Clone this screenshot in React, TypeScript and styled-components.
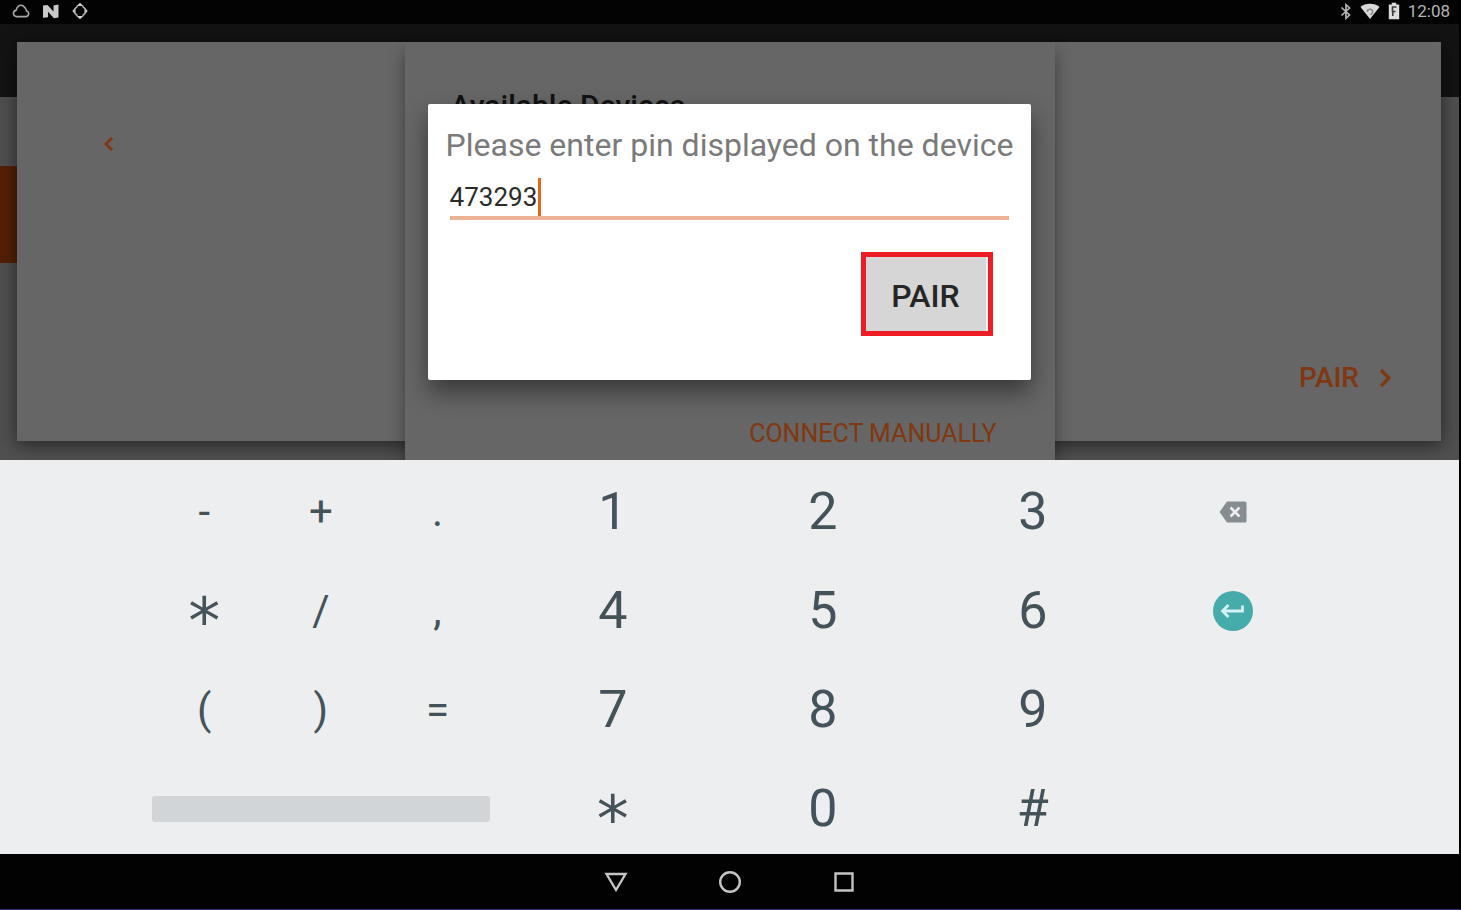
import React, { useState } from "react";
import styled, { createGlobalStyle } from "styled-components";

const GlobalStyle = createGlobalStyle`
  *, *::before, *::after { box-sizing: border-box; }
  body { margin: 0; background: #000; font-family: Roboto, "Liberation Sans", sans-serif; }
  button, input { font-family: inherit; margin: 0; padding: 0; border: 0; background: none; }
  svg { display: block; }
`;

const Screen = styled.div`
  display: flex;
  flex-direction: column;
  min-height: 100vh;
  background: #000;
  border-right: 2px solid #000;
  border-bottom: 1px solid #32357c;
`;

const StatusBar = styled.header`
  display: flex;
  justify-content: space-between;
  align-items: center;
  height: 24px;
  padding: 0 9px 2px 12px;
  background: #030303;
`;

const StatusGroup = styled.div<{ $gap: number }>`
  display: flex;
  align-items: center;
  gap: ${(p) => p.$gap}px;
`;

const Clock = styled.time`
  font-size: 17px;
  line-height: 20px;
  color: #b4b4b4;
`;

/* Windows are stacked in one grid cell, the last one on top. */
const Stage = styled.main`
  flex: 1;
  display: grid;
  grid-template: minmax(436px, 1fr) / 1fr;
  overflow: hidden;
  > * { grid-area: 1 / 1; }
`;

const Backdrop = styled.div`
  display: flex;
  flex-direction: column;
  background: #505050;
`;

const BackdropHeader = styled.div`
  height: 73px;
  background: #131313;
`;

const BackdropItem = styled.div`
  width: 200px;
  height: 97px;
  margin-top: 69px;
  background: #552006;
`;

const WizardWindow = styled.section`
  display: flex;
  justify-content: space-between;
  margin: 18px 18px 19px 17px;
  padding: 90px 48px 47px 79px;
  background: #666;
  box-shadow: 0 4px 18px rgba(0, 0, 0, 0.55);
`;

const BackButton = styled.button`
  align-self: flex-start;
  color: #81370f;
`;

const NextButton = styled.button`
  align-self: flex-end;
  display: flex;
  align-items: center;
  gap: 18px;
  font-size: 28px;
  font-weight: 500;
  line-height: 32px;
  color: #81370f;
`;

const DevicesWindow = styled.section`
  justify-self: center;
  display: flex;
  flex-direction: column;
  justify-content: space-between;
  width: 650px;
  margin-top: 18px;
  padding: 48px 58px 10px 46px;
  background: #666;
  box-shadow: 0 10px 16px rgba(0, 0, 0, 0.4);
`;

const DevicesTitle = styled.h1`
  margin: 0;
  font-size: 30px;
  font-weight: 500;
  line-height: 32px;
  color: #111;
`;

const ConnectButton = styled.button`
  align-self: flex-end;
  font-size: 25px;
  line-height: 32px;
  color: #81370f;
`;

const Dialog = styled.form`
  place-self: center;
  display: flex;
  flex-direction: column;
  padding: 23px 18px 44px;
  border-radius: 2px;
  background: #fff;
  box-shadow: 0 12px 24px rgba(0, 0, 0, 0.45);
`;

const DialogLabel = styled.label`
  font-size: 32px;
  line-height: 36px;
  white-space: nowrap;
  color: #7a7a7a;
`;

const Field = styled.div`
  position: relative;
  display: flex;
  margin: 15px 4px 32px;
`;

const PinInput = styled.input`
  width: 100%;
  height: 42px;
  border-bottom: 4px solid #edb293;
  font-size: 26px;
  line-height: 38px;
  color: #2b2b2b;
  outline: none;
`;

const Caret = styled.span`
  position: absolute;
  top: 0;
  left: 88px;
  width: 3px;
  height: 38px;
  background: #e2661c;
`;

const PairButton = styled.button`
  align-self: flex-end;
  width: 132px;
  height: 84px;
  margin-right: 20px;
  padding: 4px 4px 0 0;
  border: 5px solid #ee1c25;
  background: #d6d6d6;
  box-shadow: inset -2px 0 #f6f6f6;
  font-size: 32px;
  font-weight: 500;
  line-height: 36px;
  color: #262626;
`;

const Keyboard = styled.section`
  display: flex;
  padding: 12px 9% 5px 10%;
  background: #eceef0;
`;

const KeyGroup = styled.div<{ $columns: number; $share: number }>`
  flex: ${(p) => p.$share} 1 0;
  display: grid;
  grid-template-columns: repeat(${(p) => p.$columns}, 1fr);
  grid-auto-rows: 80px;
  row-gap: 19px;
  &:first-child { margin-right: 12px; }
`;

const Key = styled.button<{ $size?: "large" | "small" }>`
  display: flex;
  justify-content: center;
  align-items: center;
  font-size: ${(p) => (p.$size === "small" ? 42 : 52)}px;
  line-height: 80px;
  color: #44525a;
`;

const StarKey = styled(Key)`
  padding-top: 20px;
  font-family: "DejaVu Sans", sans-serif;
  font-size: 64px;
`;

const SpaceKey = styled.button`
  grid-column: 1 / -1;
  align-self: center;
  height: 26px;
  margin: 0 6px;
  border-radius: 3px;
  background: #d1d5d8;
`;

const NavBar = styled.nav`
  display: flex;
  justify-content: center;
  height: 55px;
  background: #020202;
`;

const NavButton = styled.button`
  display: flex;
  justify-content: center;
  align-items: center;
  width: 114px;
`;

const symbols = ["-", "+", ".", "*", "/", ",", "(", ")", "="];
const digits = ["1", "2", "3", "4", "5", "6", "7", "8", "9", "*", "0", "#"];

const CloudIcon = () => (
  <svg width="18" height="14" viewBox="0 0 18 14" fill="none" stroke="#a8a8a8" strokeWidth="1.6">
    <path d="M4.2 12.6h9.4a2.9 2.9 0 0 0 .9-5.7C14 4.8 11.800 1.200 9 1.200S4.600 4.200 4 6.400a3.150 3.150 0 0 0 .2 6.200z" />
  </svg>
);

const NIcon = () => (
  <svg width="18" height="15" viewBox="0 0 18 15">
    <path d="M1 1.500 5.500 1l6 6.500V1.500L16.500.5v13l-4.500.8-6-6.500v5.400L1 13.800z" fill="#c9c9c9" />
  </svg>
);

const SyncIcon = () => (
  <svg width="16" height="18" viewBox="0 0 16 18">
    <path d="M5.500 4.200 2.800 7v4l2.700 2.800M10.500 4.200 13.200 7v4l-2.700 2.800" fill="none" stroke="#a6a6a6" strokeWidth="1.800" />
    <path d="M4.500 4 8 .8 11.500 4zM4.500 14 8 17.200 11.500 14zM2.500 6.500.3 9l2.200 2.500zM13.500 6.500 15.700 9l-2.200 2.500z" fill="#cfcfcf" />
  </svg>
);

const BluetoothIcon = () => (
  <svg width="12" height="17" viewBox="0 0 12 17" fill="none" stroke="#b4b4b4" strokeWidth="1.700">
    <path d="M1.500 4.500 9.500 12 6 15.300V1.700L9.500 5 1.500 12.500" />
  </svg>
);

const WifiIcon = () => (
  <svg width="20" height="17" viewBox="0 0 20 17">
    <path d="M.5 4C3 2 6.200.8 10 .8S17 2 19.500 4L10 16z" fill="#d8d8d8" />
    <path d="M7.300 9a2.700 2.700 0 0 1 5.400 0c0 1.400-1.400 1.800-2.200 3" fill="none" stroke="#8a8a8a" strokeWidth="1.500" />
  </svg>
);

const BatteryIcon = () => (
  <svg width="12" height="18" viewBox="0 0 12 18">
    <path d="M.8 2.500h3V.8h4.400v1.700h3v14.700H.8z" fill="#dcdcdc" />
    <path d="M8.500 5H4.500v4.500h3M4.800 9v5" fill="none" stroke="#3c3c3c" strokeWidth="1.600" />
  </svg>
);

const BackspaceIcon = () => (
  <svg width="28" height="22" viewBox="0 0 28 22">
    <path d="M8 .5h18a1.500 1.500 0 0 1 1.500 1.500v18a1.500 1.500 0 0 1-1.500 1.500H8L.5 11z" fill="#848d92" />
    <path d="m11.500 6.500 9 9m0-9-9 9" stroke="#eceef0" strokeWidth="2.600" />
  </svg>
);

const EnterIcon = () => (
  <svg width="40" height="40" viewBox="0 0 40 40">
    <circle cx="20" cy="20" r="20" fill="#45abab" />
    <path d="M29.500 14.500V20H10m5.500-6L9.500 20l6 6" fill="none" stroke="#d4f3f1" strokeWidth="2.800" />
  </svg>
);

export default function App() {
  const [pin, setPin] = useState("473293");

  return (
    <>
      <GlobalStyle />
      <Screen>
        <StatusBar>
          <StatusGroup $gap={12}>
            <CloudIcon />
            <NIcon />
            <SyncIcon />
          </StatusGroup>
          <StatusGroup $gap={8}>
            <BluetoothIcon />
            <WifiIcon />
            <BatteryIcon />
            <Clock>12:08</Clock>
          </StatusGroup>
        </StatusBar>

        <Stage>
          <Backdrop>
            <BackdropHeader />
            <BackdropItem />
          </Backdrop>

          <WizardWindow>
            <BackButton type="button" aria-label="Back">
              <svg width="24" height="24" viewBox="0 0 24 24" fill="none" stroke="currentColor" strokeWidth="3">
                <path d="m16 6-6 6 6 6" />
              </svg>
            </BackButton>
            <NextButton type="button">
              PAIR
              <svg width="16" height="20" viewBox="0 0 16 20" fill="none" stroke="currentColor" strokeWidth="3.200">
                <path d="m4 2 8 8-8 8" />
              </svg>
            </NextButton>
          </WizardWindow>

          <DevicesWindow>
            <DevicesTitle>Available Devices</DevicesTitle>
            <ConnectButton type="button">CONNECT MANUALLY</ConnectButton>
          </DevicesWindow>

          <Dialog onSubmit={(e) => e.preventDefault()}>
            <DialogLabel htmlFor="pin">Please enter pin displayed on the device</DialogLabel>
            <Field>
              <PinInput id="pin" inputMode="numeric" value={pin} onChange={(e) => setPin(e.target.value)} />
              <Caret />
            </Field>
            <PairButton type="submit">PAIR</PairButton>
          </Dialog>
        </Stage>

        <Keyboard aria-label="Keyboard">
          <KeyGroup $columns={3} $share={35}>
            {symbols.map((s) =>
              s === "*" ? <StarKey key={s} type="button">{s}</StarKey> : <Key key={s} type="button" $size="small">{s}</Key>
            )}
            <SpaceKey type="button" aria-label="Space" />
          </KeyGroup>
          <KeyGroup $columns={3} $share={63}>
            {digits.map((d) =>
              d === "*" ? <StarKey key={d} type="button">{d}</StarKey> : <Key key={d} type="button">{d}</Key>
            )}
          </KeyGroup>
          <KeyGroup $columns={1} $share={19}>
            <Key type="button" aria-label="Delete"><BackspaceIcon /></Key>
            <Key type="button" aria-label="Enter"><EnterIcon /></Key>
          </KeyGroup>
        </Keyboard>

        <NavBar aria-label="System">
          <NavButton type="button" aria-label="Back">
            <svg width="24" height="22" viewBox="0 0 24 22" fill="none" stroke="#c4c4c4" strokeWidth="2.400">
              <path d="M2.500 3h19L12 19z" />
            </svg>
          </NavButton>
          <NavButton type="button" aria-label="Home">
            <svg width="24" height="24" viewBox="0 0 24 24" fill="none" stroke="#c4c4c4" strokeWidth="2.400">
              <circle cx="12" cy="12" r="9.800" />
            </svg>
          </NavButton>
          <NavButton type="button" aria-label="Recent apps">
            <svg width="22" height="22" viewBox="0 0 22 22" fill="none" stroke="#c4c4c4" strokeWidth="2.400">
              <path d="M2.500 2.500h17v17h-17z" />
            </svg>
          </NavButton>
        </NavBar>
      </Screen>
    </>
  );
}
